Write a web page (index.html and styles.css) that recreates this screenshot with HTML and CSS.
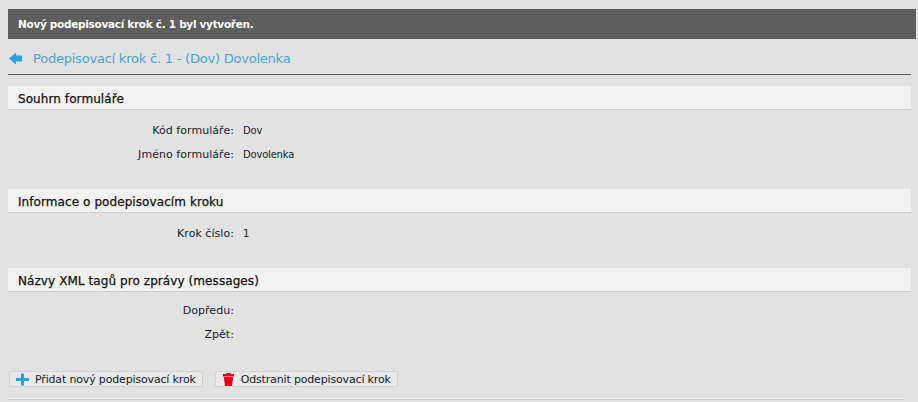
FILE: index.html
```html
<!DOCTYPE html>
<html lang="cs">

<head>
  <meta charset="UTF-8" />
  <title>Podepisovací krok</title>
  <link rel="stylesheet" href="styles.css">
</head>

<body>
  <div class="notice">Nový podepisovací krok č. 1 byl vytvořen.</div>

  <main class="content">
    <h1 class="page-title">
      <a class="back" href="#">
        <svg width="13" height="13" viewBox="0 0 13 13"><path d="M0 6.500 L7 0.500 V3.500 H13 V9.500 H7 V12.500 Z" fill="#29a3dc" /></svg>
      </a>
      <span>Podepisovací krok č. 1 - (Dov) Dovolenka</span>
    </h1>

    <section class="block block-first">
      <h2>Souhrn formuláře</h2>
      <dl class="rows">
        <dt>Kód formuláře:</dt><dd>Dov</dd>
        <dt>Jméno formuláře:</dt><dd>Dovolenka</dd>
      </dl>
    </section>

    <section class="block">
      <h2>Informace o podepisovacím kroku</h2>
      <dl class="rows">
        <dt>Krok číslo:</dt><dd>1</dd>
      </dl>
    </section>

    <section class="block">
      <h2>Názvy XML tagů pro zprávy (messages)</h2>
      <dl class="rows rows-tight">
        <dt>Dopředu:</dt><dd></dd>
        <dt>Zpět:</dt><dd></dd>
      </dl>
    </section>

    <div class="actions">
      <button type="button">
        <svg width="13" height="13" viewBox="0 0 13 13"><path d="M5 0.500 H8 V5 H13 V8 H8 V12.500 H5 V8 H0 V5 H5 Z" fill="#29a3dc" /></svg>
        Přidat nový podepisovací krok
      </button>
      <button type="button">
        <svg width="13" height="13" viewBox="0 0 13 13"><path d="M4.500 0 H8.500 L9 1 H12 V3.500 H1 V1 H4 Z M1.800 4 H11.200 L10 13 H3 Z" fill="#e3001b" /></svg>
        Odstranit podepisovací krok
      </button>
    </div>
    <hr class="divider">
  </main>
</body>

</html>
```

FILE: styles.css
```css
* { margin: 0; padding: 0; box-sizing: border-box; }
body {
  font-family: "DejaVu Sans", Verdana, sans-serif;
  font-size: 11px;
  background-color: #e2e2e2;
  color: #1a1a2e;
  padding: 9px 2px 0 8px;
  overflow: hidden;
}
.notice {
  background-color: #5e5e5e;
  color: white;
  font-weight: bold;
  font-size: 10.5px;
  letter-spacing: -0.3px;
  height: 30px;
  line-height: 30px;
  padding-left: 10px;
}
.content { padding-right: 5px; }
.page-title {
  display: flex;
  align-items: center;
  gap: 11px;
  height: 36px;
  padding-top: 4px;
  padding-left: 1px;
  border-bottom: 1px solid #5e5e5e;
  font-size: 13px;
  font-weight: normal;
  letter-spacing: -0.22px;
  color: #45a7d6;
}
.back { display: flex; }
.block { margin-top: 26px; }
.block-first { margin-top: 11px; }
.block h2 {
  background-color: #f1f1f1;
  border-bottom: 1px solid #cfcfcf;
  color: #111;
  font-size: 12px;
  font-weight: normal;
  letter-spacing: 0.08px;
  -webkit-text-stroke: 0.25px #111;
  height: 24px;
  line-height: 26px;
  padding-left: 10px;
}
.rows {
  display: grid;
  grid-template-columns: 226px 1fr;
  column-gap: 9px;
  row-gap: 8px;
  padding-top: 13px;
  line-height: 16px;
}
.rows-tight { padding-top: 11px; }
.rows dt { text-align: right; letter-spacing: 0.05px; }
.rows dd { font-size: 10px; letter-spacing: -0.2px; min-height: 16px; }
.actions {
  display: flex;
  gap: 12px;
  margin: 28px 0 11px 1px;
}
.actions button {
  display: flex;
  align-items: center;
  gap: 6px;
  height: 16px;
  padding: 0 6px 0 6px;
  background-color: #e8e8e8;
  border: 1px solid #d4d4d4;
  color: #1a1a2e;
  font-family: inherit;
  font-size: 11px;
  letter-spacing: -0.16px;
}
.divider {
  border: none;
  border-top: 1px solid #f1f1f1;
  border-bottom: 1px solid #cfcfcf;
  margin-right: 6px;
}
```
